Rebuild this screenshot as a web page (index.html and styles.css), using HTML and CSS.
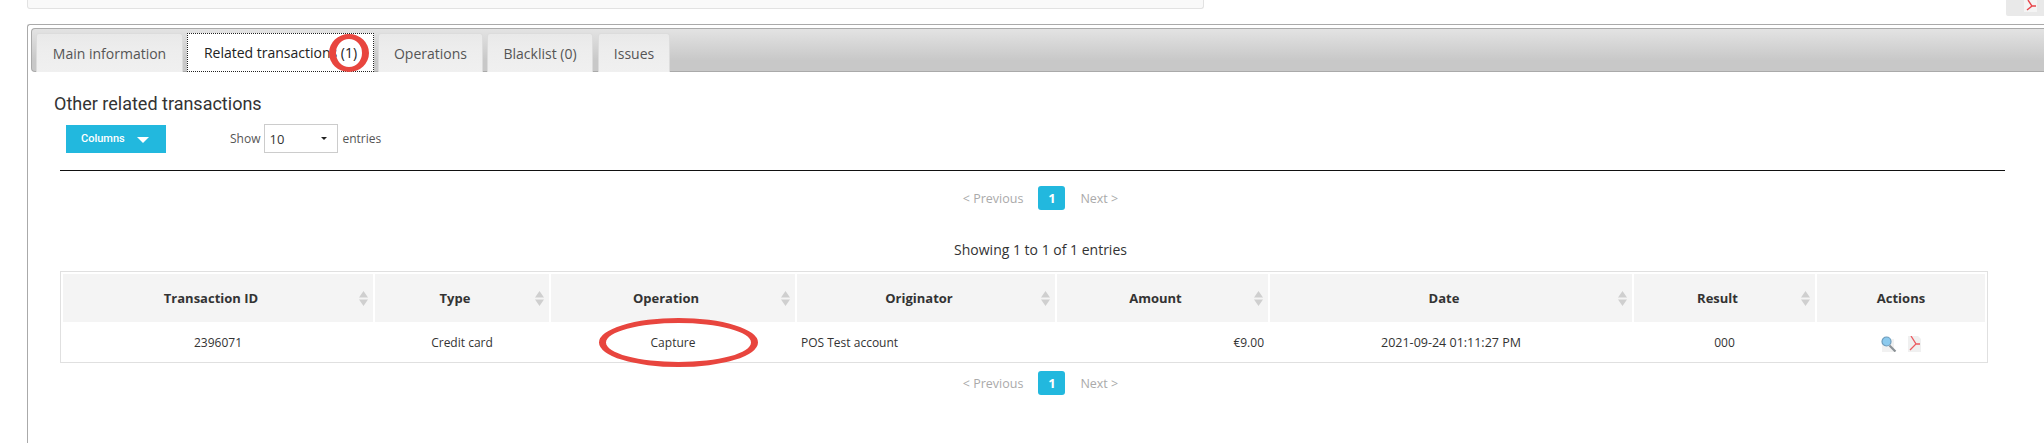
FILE: index.html
```html
<!DOCTYPE html>
<html lang="en">
<head>
<meta charset="utf-8">
<title>Related transactions</title>
<link rel="stylesheet" href="styles.css">
</head>
<body>
<div class="top-row">
  <div class="top-box"></div>
  <div class="export-box">
    <svg class="export-icon" viewBox="0 0 13 12"><rect width="13" height="12" fill="#f4f4f4"/><path d="M4 0 8 6 3 10M8 6H12" fill="none" stroke="#e8454b" stroke-width="1.4"/></svg>
  </div>
</div>
<section class="panel">
  <div class="tabs">
    <a class="tab tab-main">Main information</a>
    <a class="tab tab-related active">Related transactions (1)</a>
    <a class="tab tab-operations">Operations</a>
    <a class="tab tab-blacklist">Blacklist (0)</a>
    <a class="tab tab-issues">Issues</a>
    <span class="mark mark-tab"></span>
  </div>
  <div class="content">
    <h2 class="title">Other related transactions</h2>
    <div class="controls">
      <button class="columns">Columns<span class="caret"></span></button>
      <label class="length">Show <span class="select">10<span class="select-caret"></span></span> entries</label>
    </div>
    <div class="rule"></div>
    <div class="pager">
      <span class="page-link">&lt; Previous</span><span class="page-num">1</span><span class="page-link">Next &gt;</span>
    </div>
    <div class="info">Showing 1 to 1 of 1 entries</div>
    <div class="table-wrap">
      <table class="grid">
        <colgroup>
          <col class="c1"><col class="c2"><col class="c3"><col class="c4"><col class="c5"><col class="c6"><col class="c7"><col class="c8">
        </colgroup>
        <thead>
          <tr>
            <th class="sortable">Transaction ID</th>
            <th class="sortable">Type</th>
            <th class="sortable">Operation</th>
            <th class="sortable">Originator</th>
            <th class="sortable">Amount</th>
            <th class="sortable">Date</th>
            <th class="sortable">Result</th>
            <th>Actions</th>
          </tr>
        </thead>
        <tbody>
          <tr>
            <td>2396071</td>
            <td>Credit card</td>
            <td>Capture</td>
            <td class="left">POS Test account</td>
            <td class="right">€9.00</td>
            <td class="date">2021-09-24 01:11:27 PM</td>
            <td>000</td>
            <td class="actions">
              <svg class="icon icon-view" viewBox="0 0 16 16"><rect x="1" y="3" width="12" height="13" fill="#f1f1f1"/><path d="M8.5 9.5 14.5 15.5" stroke="#8b9196" stroke-width="2.2"/><circle cx="5.5" cy="5.5" r="4.5" fill="#8ccaee" stroke="#6d9cbc" stroke-width="1.2"/></svg>
              <svg class="icon icon-pdf" viewBox="0 0 13 16"><path d="M0 0H10L13 3V16H0Z" fill="#f0f0f0"/><path d="M3 0 8 8 2 14M8 8H12" fill="none" stroke="#ec5a60" stroke-width="1.3"/></svg>
            </td>
          </tr>
        </tbody>
      </table>
      <span class="mark mark-op"></span>
    </div>
    <div class="pager pager-bottom">
      <span class="page-link">&lt; Previous</span><span class="page-num">1</span><span class="page-link">Next &gt;</span>
    </div>
  </div>
</section>
</body>
</html>
```
FILE: styles.css
```css
* { box-sizing: border-box; }
html, body { margin: 0; padding: 0; }
body {
  width: 2044px;
  height: 443px;
  overflow: hidden;
  background: #fff;
  font-family: "Open Sans", sans-serif;
  font-size: 12px;
  color: #333;
}
.top-row {
  display: flex;
  justify-content: space-between;
  height: 24px;
  padding-left: 27px;
}
.top-box {
  width: 1177px;
  height: 9px;
  background: #f9f9f9;
  border: 1px solid #e2e2e2;
  border-top: 0;
  border-radius: 0 0 3px 3px;
}
.export-box {
  width: 38px;
  height: 16px;
  background: #e9e9e9;
  border-radius: 0 0 0 2px;
  padding-left: 18px;
}
.export-icon { display: block; width: 13px; height: 12px; }
.panel {
  margin-left: 27px;
  height: 419px;
  border-top: 1px solid #aaa;
  border-left: 1px solid #aaa;
  border-top-left-radius: 3px;
  padding: 3px 0 0 3px;
}
.tabs {
  position: relative;
  display: flex;
  gap: 4px;
  height: 44px;
  padding: 4px 0 0 4px;
  background: linear-gradient(#e3e3e3, #c8c8c8 75%);
  border-top: 1px solid #aaa;
  border-bottom: 1px solid #aaa;
  border-left: 1px solid #aaa;
  border-radius: 4px 0 0 4px;
}
.tab {
  display: flex;
  align-items: center;
  justify-content: center;
  height: 39px;
  font-size: 14px;
  color: #555;
  background: linear-gradient(#e9e9e9, #ededed 40%, #f0f0f0);
  border: 1px solid #dcdcdc;
  border-bottom: 0;
  border-radius: 3px 3px 0 0;
}
.tab-main { width: 147px; }
.tab-related { width: 187px; }
.tab-operations { width: 105px; }
.tab-blacklist { width: 106px; margin-right: 1px; }
.tab-issues { width: 72px; }
.tab.active {
  color: #222;
  background: #fff;
  border: 1px dotted #222;
  border-radius: 0;
}
.mark {
  position: absolute;
  border-style: solid;
  border-color: #e8453e;
  border-width: 5px 7px;
  border-radius: 50%;
}
.mark-tab { left: 297px; top: 5px; width: 40px; height: 38px; }
.title {
  margin: 0;
  padding: 23px 0 0 23px;
  font-family: Roboto, sans-serif;
  font-size: 18px;
  font-weight: 400;
  line-height: 18px;
  color: #333;
}
.controls {
  display: flex;
  align-items: center;
  gap: 64px;
  height: 29px;
  margin-top: 11px;
  padding-left: 35px;
}
.columns {
  display: flex;
  align-items: center;
  width: 100px;
  height: 28px;
  padding: 0 0 0 15px;
  border: 0;
  background: #22b8de;
  color: #fff;
  font-family: Roboto, sans-serif;
  font-size: 11px;
  font-weight: 500;
}
.caret {
  margin: 3px 0 0 12px;
  border-top: 6px solid #fff;
  border-left: 6px solid transparent;
  border-right: 6px solid transparent;
}
.length {
  display: flex;
  align-items: center;
  gap: 4px;
  font-size: 12px;
  color: #555;
}
.select {
  display: flex;
  align-items: center;
  justify-content: space-between;
  width: 74px;
  height: 29px;
  padding: 0 10px 0 4px;
  border: 1px solid #ccc;
  font-size: 13px;
  color: #333;
}
.select-caret {
  border-top: 3px solid #222;
  border-left: 3px solid transparent;
  border-right: 3px solid transparent;
}
.rule {
  height: 1px;
  margin: 17px 39px 0 29px;
  background: #111;
}
.pager {
  display: flex;
  align-items: center;
  justify-content: center;
  gap: 15px;
  height: 24px;
  margin-top: 15px;
  padding-left: 6px;
  font-size: 12.5px;
  color: #aaa;
}
.page-num {
  width: 27px;
  height: 24px;
  line-height: 24px;
  text-align: center;
  border-radius: 3px;
  background: #22b8de;
  color: #fff;
  font-size: 13px;
  font-weight: 700;
}
.info {
  margin-top: 31px;
  padding-left: 6px;
  text-align: center;
  font-size: 14px;
  line-height: 18px;
  color: #333;
}
.table-wrap {
  position: relative;
  width: 1928px;
  margin: 12px 0 0 29px;
}
.grid {
  width: 1928px;
  height: 92px;
  table-layout: fixed;
  border-collapse: separate;
  border-spacing: 2px 0;
  border: 1px solid #e0e0e0;
  padding-top: 2px;
}
.c1 { width: 310px; }
.c2 { width: 174px; }
.c3 { width: 244px; }
.c4 { width: 258px; }
.c5 { width: 211px; }
.c6 { width: 362px; }
.c7 { width: 181px; }
.c8 { width: 168px; }
th {
  position: relative;
  height: 48px;
  padding: 0;
  background: #f4f4f4;
  font-size: 13px;
  font-weight: 700;
  color: #333;
  text-align: center;
}
.sortable { padding-right: 14px; }
.sortable::before {
  content: "";
  position: absolute;
  right: 5px;
  top: 17px;
  width: 9px;
  height: 15px;
  background: #cfcfcf;
  clip-path: polygon(50% 0, 100% 43%, 0 43%, 0 57%, 100% 57%, 50% 100%, 0 57%, 0 43%);
}
td {
  height: 39px;
  padding: 0 4px;
  font-size: 12px;
  color: #333;
  text-align: center;
}
td.left { text-align: left; }
td.right { text-align: right; }
td.date { font-size: 12.5px; }
.actions { padding-top: 2px; }
.icon { height: 16px; vertical-align: middle; }
.icon-view { width: 16px; margin-right: 8px; }
.icon-pdf { width: 13px; }
.mark-op { left: 539px; top: 47px; width: 159px; height: 49px; }
.pager-bottom { margin-top: 8px; }
```
